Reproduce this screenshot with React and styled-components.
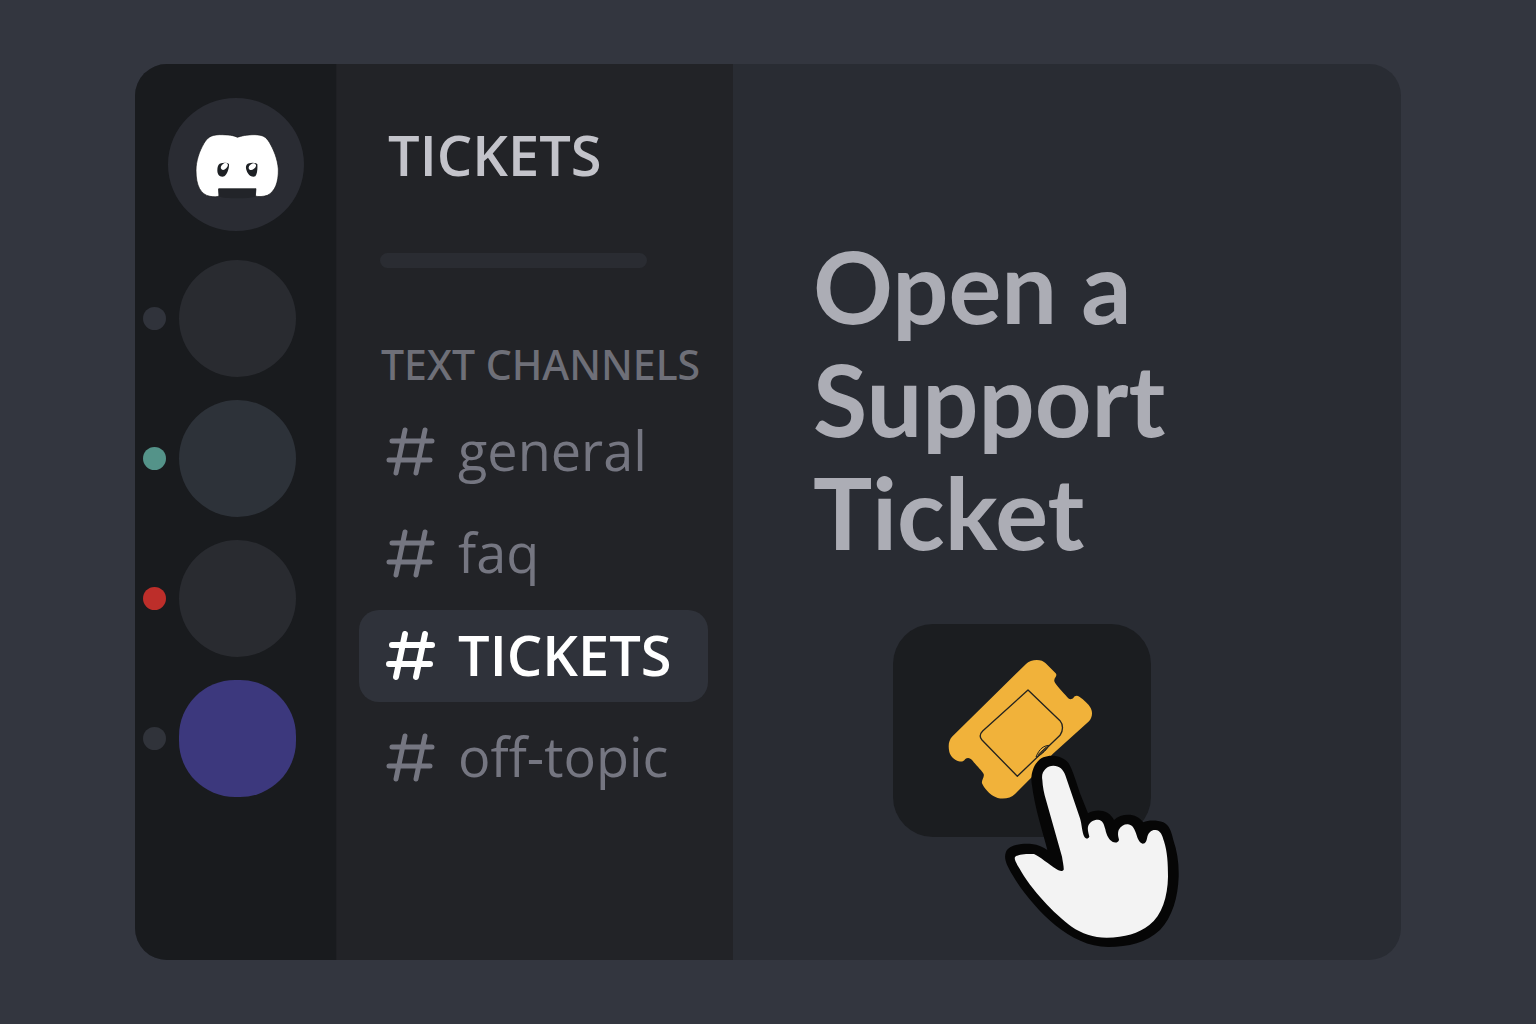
import React from "react";
import styled, { createGlobalStyle } from "styled-components";

const GlobalStyle = createGlobalStyle`
  *, *::before, *::after { box-sizing: border-box; }
  body {
    margin: 0;
    background: #33363f;
    font-family: "Open Sans", "Noto Sans", sans-serif;
  }
  h1, h2, h3, ul { margin: 0; padding: 0; font-weight: inherit; }
  ul { list-style: none; }
  button { border: 0; padding: 0; cursor: pointer; font: inherit; }
`;

const Page = styled.div`
  min-height: 100vh;
  padding: 64px 135px;
  display: flex;
`;

const Window = styled.div`
  flex: 1;
  display: grid;
  grid-template-columns: 201px 397px 1fr;
  border-radius: 32px;
  overflow: hidden;
  background: #292c33;
`;

const Rail = styled.nav`
  background: #191b1e;
  padding-top: 34px;
  display: flex;
  flex-direction: column;
  gap: 29px;
`;

const HomeButton = styled.button`
  align-self: center;
  width: 136px;
  height: 133px;
  border-radius: 50%;
  background: #2a2c33;
  display: grid;
  place-items: center;
`;

const ServerList = styled.ul`
  display: flex;
  flex-direction: column;
  gap: 23px;
`;

const ServerRow = styled.li`
  display: flex;
  align-items: center;
  gap: 13px;
  padding-left: 8px;
`;

const StatusDot = styled.span`
  width: 23px;
  height: 23px;
  border-radius: 50%;
  background: ${(p) => p.$color};
`;

const ServerButton = styled.button`
  width: 117px;
  height: 117px;
  border-radius: ${(p) => p.$radius};
  background: ${(p) => p.$color};
`;

const Sidebar = styled.aside`
  background: #222327;
  border-left: 1px solid #1f2024;
  padding: 52px 25px 0 22px;
  display: flex;
  flex-direction: column;
`;

const SidebarTitle = styled.h2`
  padding-left: 29px;
  font-size: 56px;
  line-height: 76px;
  font-weight: 600;
  color: #c3c3ca;
`;

const Divider = styled.hr`
  width: 267px;
  height: 15px;
  margin: 61px 0 0 21px;
  border: 0;
  border-radius: 8px;
  background: #2a2c32;
`;

const SectionLabel = styled.h3`
  margin-top: 68px;
  padding-left: 22px;
  font-family: "Noto Sans", "Open Sans", sans-serif;
  font-size: 41px;
  line-height: 56px;
  font-weight: 500;
  white-space: nowrap;
  color: #6e6f78;
`;

const ChannelList = styled.ul`
  margin-top: 14px;
  display: flex;
  flex-direction: column;
  gap: 10px;
`;

const ChannelLink = styled.a`
  height: 92px;
  padding-left: 27px;
  display: flex;
  align-items: center;
  gap: 22px;
  border-radius: 20px;
  font-size: ${(p) => (p.$active ? "56px" : "54px")};
  line-height: 76px;
  text-decoration: none;
  white-space: nowrap;
  font-weight: ${(p) => (p.$active ? 600 : 400)};
  color: ${(p) => (p.$active ? "#ffffff" : "#757681")};
  background: ${(p) => (p.$active ? "#2f323a" : "transparent")};
`;

const ChannelName = styled.span`
  padding-bottom: 4px;
`;

const Main = styled.main`
  padding: 165px 80px 0 80px;
`;

const Heading = styled.h1`
  font-family: Lato, "Open Sans", sans-serif;
  max-width: 400px;
  font-size: 99px;
  line-height: 113px;
  font-weight: 700;
  color: #acadb5;
`;

const TicketButton = styled.button`
  position: relative;
  margin: 56px 0 0 80px;
  width: 258px;
  height: 213px;
  border-radius: 40px;
  background: #1b1d20;
  display: grid;
  place-items: center;
`;

const HandCursor = styled.svg`
  position: absolute;
  left: 109px;
  top: 129px;
  pointer-events: none;
`;

function HomeLogo() {
  return (
    <svg width="88" height="72" viewBox="186 205 264 216" aria-hidden="true">
      <path
        fill="#fff"
        stroke="#15171a"
        strokeWidth="2"
        d="M322 230C312 224 295 222 268 222C240 223 232 232 222 248C208 272 198 300 198 330C198 375 212 402 240 407C250 409 262 409 267 406L266 384L378 384L376 406C385 409 400 408 412 404C435 393 446 365 445 325C443 295 430 265 418 245C408 228 398 223 375 222C350 222 333 226 322 230Z"
      />
      <path fill="#222429" d="M265 385L378 385L376 408C350 414 290 414 267 408Z" />
      <path fill="#1d2024" d="M266 312C272 305 290 304 297 310C298 322 292 340 283 347C270 351 262 342 262 330C262 322 263 316 266 312Z" />
      <ellipse cx="283" cy="317" rx="12" ry="8" fill="#fff" transform="rotate(-45 283 317)" />
      <path fill="#1d2024" d="M350 312C356 305 375 304 382 310C383 322 382 340 376 347C364 351 354 342 350 330C347 322 347 316 350 312Z" />
      <ellipse cx="367" cy="318" rx="12" ry="8" fill="#fff" transform="rotate(-38 367 318)" />
    </svg>
  );
}

function HashIcon({ active }) {
  return (
    <svg
      width="50"
      height="50"
      viewBox="0 0 50 50"
      fill="none"
      stroke="currentColor"
      strokeWidth={active ? 6 : 5}
      strokeLinecap="round"
      aria-hidden="true"
    >
      <path d="M19 3L10 46M39 3L30 46M6 14H46M3 33H44" />
    </svg>
  );
}

function TicketIcon() {
  return (
    <svg width="150" height="146" viewBox="201 142 450 438" aria-hidden="true">
      <path
        fill="#f1b23a"
        d="M438 160C452 145 485 143 497 158L527 188C534 196 521 200 523 212C526 222 550 246 562 260C568 268 576 266 580 262C584 254 592 254 598 258C612 268 626 280 632 292C640 308 635 322 627 332L518 430L455 500L405 550C390 566 358 568 340 556C328 550 312 532 306 518C304 508 314 500 311 490C306 480 290 466 278 450C270 440 262 440 256 445C250 454 244 453 236 452C224 448 212 438 208 424C204 404 206 390 216 378Z"
      />
      <g fill="none" stroke="#24231f" strokeWidth="4" strokeLinejoin="round">
        <path d="M444 238L540 330C550 342 550 360 540 374L412 497L306 388C299 380 299 370 308 361Z" />
        <path strokeWidth="3" d="M468 439C474 424 484 406 506 404C502 415 488 431 468 439ZM474 432L500 408" />
      </g>
    </svg>
  );
}

function Hand() {
  return (
    <HandCursor width="180" height="196" viewBox="366 429 540 588" aria-hidden="true">
      <path
        fill="#060606"
        d="M455 520C450 480 470 450 490 442C515 432 550 438 566 460C578 480 590 520 600 550L624 610C640 600 665 599 682 608C692 614 698 622 702 630C718 614 750 610 770 620C780 625 786 632 790 637C805 630 830 630 850 637C868 645 874 665 880 690C892 725 897 760 896 800C894 860 878 920 840 960C800 998 745 1011 685 1011C625 1010 575 985 525 945C480 908 430 850 398 796C380 765 370 745 378 725C388 705 420 700 455 702C475 704 490 712 502 720C490 670 465 600 455 520Z"
      />
      <path
        fill="#f3f3f3"
        d="M487 510C482 485 500 467 520 467C538 467 550 478 556 496L600 625C606 645 606 668 613 680C617 687 625 687 628 680C626 670 622 662 624 650C628 636 640 629 654 629C668 630 672 642 676 658C680 678 688 690 697 695C706 700 716 697 717 689C715 680 712 672 716 660C722 648 734 642 744 643C760 646 764 658 770 676C774 690 780 700 788 701C797 701 800 692 802 680C806 666 816 659 826 660C842 661 847 676 852 694C862 725 864 760 864 800C863 860 846 915 808 945C775 970 735 983 680 983C640 983 605 970 575 950C525 915 450 835 418 775C408 758 402 748 405 741C412 733 440 731 462 732C480 740 505 762 530 778C540 784 548 784 551 779C552 770 548 755 546 740L498 570C492 550 488 530 487 510Z"
      />
    </HandCursor>
  );
}

const servers = [
  { id: 1, dot: "#30333b", color: "#292b30", radius: "50%" },
  { id: 2, dot: "#549389", color: "#2d3239", radius: "50%" },
  { id: 3, dot: "#bd2e2a", color: "#292b30", radius: "50%" },
  { id: 4, dot: "#30333a", color: "#3c387d", radius: "56px" },
];

const channels = ["general", "faq", "TICKETS", "off-topic"];

export default function App() {
  return (
    <>
      <GlobalStyle />
      <Page>
        <Window>
          <Rail>
            <HomeButton type="button" aria-label="Home">
              <HomeLogo />
            </HomeButton>
            <ServerList>
              {servers.map((s) => (
                <ServerRow key={s.id}>
                  <StatusDot $color={s.dot} />
                  <ServerButton
                    type="button"
                    aria-label={`Server ${s.id}`}
                    $color={s.color}
                    $radius={s.radius}
                  />
                </ServerRow>
              ))}
            </ServerList>
          </Rail>
          <Sidebar>
            <SidebarTitle>TICKETS</SidebarTitle>
            <Divider />
            <SectionLabel>TEXT CHANNELS</SectionLabel>
            <ChannelList>
              {channels.map((name) => (
                <li key={name}>
                  <ChannelLink href={`#${name}`} $active={name === "TICKETS"}>
                    <HashIcon active={name === "TICKETS"} />
                    <ChannelName>{name}</ChannelName>
                  </ChannelLink>
                </li>
              ))}
            </ChannelList>
          </Sidebar>
          <Main>
            <Heading>Open a Support Ticket</Heading>
            <TicketButton type="button" aria-label="Open a ticket">
              <TicketIcon />
              <Hand />
            </TicketButton>
          </Main>
        </Window>
      </Page>
    </>
  );
}
